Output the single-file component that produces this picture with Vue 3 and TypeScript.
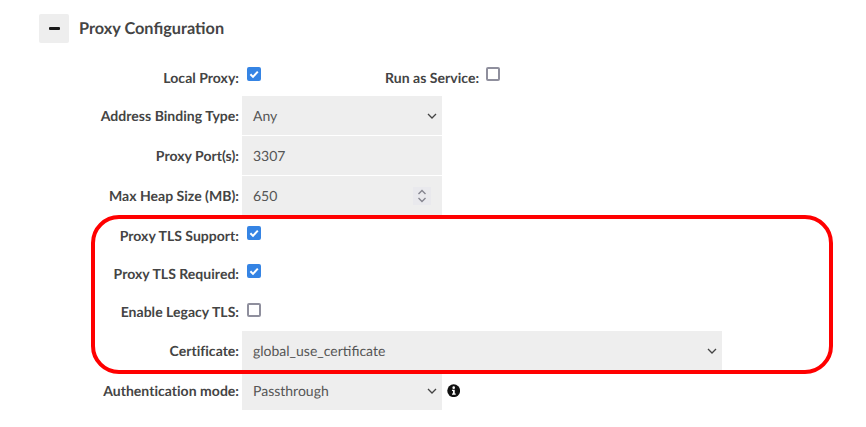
<script setup lang="ts">
interface Check { label: string; checked: boolean; last?: boolean }
const tls: Check[] = [
  { label: 'Proxy TLS Support:', checked: true },
  { label: 'Proxy TLS Required:', checked: true },
  { label: 'Enable Legacy TLS:', checked: false, last: true },
]
</script>

<template>
  <div class="page">
    <header class="head">
      <button class="toggle" type="button" aria-label="Collapse"><span class="minus"></span></button>
      <h2 class="title">Proxy Configuration</h2>
    </header>

    <div class="form">
      <div class="row check-row">
        <label class="lbl">Local Proxy:</label>
        <span class="box on"><svg viewBox="0 0 14 14" width="14" height="14"><path d="M3.4 7.3 6 9.9 10.8 4.6" fill="none" stroke="#fff" stroke-width="2"/></svg></span>
        <label class="lbl service">Run as Service:</label>
        <span class="box service-box"></span>
      </div>

      <div class="row field-row">
        <label class="lbl">Address Binding Type:</label>
        <div class="field">
          <span>Any</span>
          <svg class="chev" viewBox="0 0 10 6" width="10" height="6"><path d="M1 1 5 5 9 1" fill="none" stroke="#444" stroke-width="1.3"/></svg>
        </div>
      </div>
      <div class="row field-row">
        <label class="lbl">Proxy Port(s):</label>
        <div class="field"><span>3307</span></div>
      </div>
      <div class="row field-row">
        <label class="lbl">Max Heap Size (MB):</label>
        <div class="field">
          <span>650</span>
          <span class="spin">
            <svg viewBox="0 0 18 18" width="18" height="18"><path d="M5.5 7 9 3.5 12.5 7M5.5 11 9 14.5 12.5 11" fill="none" stroke="#85858f" stroke-width="1.4"/></svg>
          </span>
        </div>
      </div>

      <div class="row check-row tls" :class="{ last: c.last }" v-for="c in tls" :key="c.label">
        <label class="lbl">{{ c.label }}</label>
        <span class="box" :class="{ on: c.checked }">
          <svg v-if="c.checked" viewBox="0 0 14 14" width="14" height="14"><path d="M3.4 7.3 6 9.9 10.8 4.6" fill="none" stroke="#fff" stroke-width="2"/></svg>
        </span>
      </div>

      <div class="row field-row">
        <label class="lbl">Certificate:</label>
        <div class="field wide">
          <span>global_use_certificate</span>
          <svg class="chev" viewBox="0 0 10 6" width="10" height="6"><path d="M1 1 5 5 9 1" fill="none" stroke="#444" stroke-width="1.3"/></svg>
        </div>
      </div>
      <div class="row field-row">
        <label class="lbl">Authentication mode:</label>
        <div class="field">
          <span>Passthrough</span>
          <svg class="chev" viewBox="0 0 10 6" width="10" height="6"><path d="M1 1 5 5 9 1" fill="none" stroke="#444" stroke-width="1.3"/></svg>
        </div>
        <svg class="info" viewBox="0 0 14 14" width="14" height="14">
          <circle cx="7" cy="7" r="6.7" fill="#111"/>
          <circle cx="7" cy="3.8" r="1.35" fill="#fff"/>
          <path d="M5.2 6h2.9v4h1v1.3H5.2V10h1V7.3h-1z" fill="#fff"/>
        </svg>
      </div>

      <div class="callout"></div>
    </div>
  </div>
</template>

<style>
html, body { margin: 0; background: #fff; }
</style>

<style scoped>
.page {
  width: 866px;
  height: 427px;
  overflow: hidden;
  box-sizing: border-box;
  padding-top: 14px;
  font-family: Lato, "Open Sans", sans-serif;
  color: #444;
  font-size: 14px;
  text-rendering: geometricPrecision;
}
.head {
  display: flex;
  align-items: center;
  gap: 10px;
  margin-left: 39px;
  height: 29px;
}
.toggle {
  width: 30px;
  height: 29px;
  padding: 0;
  border: 0;
  border-radius: 2px;
  background: #eee;
  display: flex;
  align-items: center;
  justify-content: center;
}
.minus {
  width: 11px;
  height: 3px;
  background: #1a1a1a;
  border-radius: 1px;
}
.title {
  margin: -1px 0 0;
  font-size: 16.3px;
  font-weight: 700;
  color: #444;
}
.form {
  position: relative;
  margin-top: 15px;
}
.row {
  display: flex;
  align-items: center;
}
.check-row { height: 38px; }
.check-row.last { height: 39px; }
.field-row {
  height: 40px;
  align-items: flex-start;
}
.field-row .lbl { line-height: 39px; }
.lbl {
  width: 239px;
  flex: none;
  text-align: right;
  font-weight: 700;
  color: #444;
  letter-spacing: 0.03px;
}
.lbl.service {
  width: auto;
  margin-left: 124px;
}
.box {
  box-sizing: border-box;
  width: 14px;
  height: 14px;
  margin-left: 8px;
  margin-top: -6px;
  border: 2px solid #8f8f9d;
  border-radius: 2px;
  background: #fff;
  flex: none;
  position: relative;
}
.tls .box { margin-top: -4px; }
.box.service-box { margin-left: 7px; }
.box svg {
  position: absolute;
  left: -2px;
  top: -2px;
  display: block;
}
.box.on {
  background: #3584e4;
  border-color: #3584e4;
}
.field {
  box-sizing: border-box;
  width: 200px;
  height: 39px;
  margin-left: 3px;
  padding: 0 5px 0 11px;
  background: #eee;
  color: #555;
  display: flex;
  align-items: center;
  justify-content: space-between;
  flex: none;
}
.field.wide { width: 480px; }
.chev { flex: none; }
.spin {
  width: 18px;
  height: 18px;
  margin-right: 6px;
  background: #e9e9ed;
  display: block;
}
.spin svg { display: block; }
.info {
  flex: none;
  width: 13.4px;
  height: 13.4px;
  margin-left: 5px;
  margin-top: 13px;
}
.callout {
  position: absolute;
  left: 91px;
  top: 157px;
  width: 742px;
  height: 159px;
  box-sizing: border-box;
  border: 4px solid #f00;
  border-radius: 28px;
  pointer-events: none;
}
</style>
